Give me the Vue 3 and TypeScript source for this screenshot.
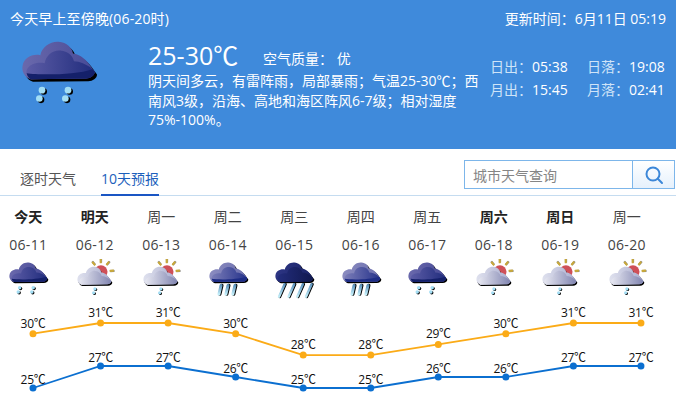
<script setup lang="ts">
type IconType = 'rain' | 'sunny' | 'shower' | 'storm'

interface Day {
  week: string
  date: string
  icon: IconType
  high: number
  low: number
  bold?: boolean
}

const days: Day[] = [
  { week: '今天', date: '06-11', icon: 'rain', high: 30, low: 25, bold: true },
  { week: '明天', date: '06-12', icon: 'sunny', high: 31, low: 27, bold: true },
  { week: '周一', date: '06-13', icon: 'sunny', high: 31, low: 27 },
  { week: '周二', date: '06-14', icon: 'shower', high: 30, low: 26 },
  { week: '周三', date: '06-15', icon: 'storm', high: 28, low: 25 },
  { week: '周四', date: '06-16', icon: 'shower', high: 28, low: 25 },
  { week: '周五', date: '06-17', icon: 'rain', high: 29, low: 26 },
  { week: '周六', date: '06-18', icon: 'sunny', high: 30, low: 26, bold: true },
  { week: '周日', date: '06-19', icon: 'sunny', high: 31, low: 27, bold: true },
  { week: '周一', date: '06-20', icon: 'sunny', high: 31, low: 27 },
]

// chart scale, taken from the two lines in the screenshot
const pointX = (i: number) => 33 + i * 67.55
const highY = (t: number) => 23 + (31 - t) * 10.7
const lowY = (t: number) => 66 + (27 - t) * 11

const highPoints = days.map((d, i) => ({ x: pointX(i), y: highY(d.high), t: d.high }))
const lowPoints = days.map((d, i) => ({ x: pointX(i), y: lowY(d.low), t: d.low }))
const toLine = (pts: { x: number; y: number }[]) => pts.map((p) => `${p.x},${p.y}`).join(' ')

const rays = [-130, -90, -50, -5]
</script>

<template>
  <div class="page">
    <svg class="defs" aria-hidden="true">
      <defs>
        <linearGradient id="rain-back" x1="0" x2="1" y1="0" y2="0">
          <stop offset="0" stop-color="#6a69ac" />
          <stop offset="1" stop-color="#474a96" />
        </linearGradient>
        <linearGradient id="rain-front" x1="0" x2="1" y1="0" y2="0">
          <stop offset="0" stop-color="#5c5ca6" />
          <stop offset="1" stop-color="#202c7c" />
        </linearGradient>
        <linearGradient id="shower-back" x1="0" x2="1" y1="0" y2="0">
          <stop offset="0" stop-color="#8b8cc0" />
          <stop offset="1" stop-color="#6d70ae" />
        </linearGradient>
        <linearGradient id="shower-front" x1="0" x2="1" y1="0" y2="0">
          <stop offset="0" stop-color="#7b7db8" />
          <stop offset="1" stop-color="#25328a" />
        </linearGradient>
        <linearGradient id="storm-back" x1="0" x2="1" y1="0" y2="0">
          <stop offset="0" stop-color="#2d3584" />
          <stop offset="1" stop-color="#1a2468" />
        </linearGradient>
        <linearGradient id="storm-front" x1="0" x2="1" y1="0" y2="0">
          <stop offset="0" stop-color="#232d7c" />
          <stop offset="1" stop-color="#10184e" />
        </linearGradient>
        <linearGradient id="pale-back" x1="0" x2="1" y1="0" y2="0">
          <stop offset="0" stop-color="#dfe1ee" />
          <stop offset="1" stop-color="#a9acce" />
        </linearGradient>
        <linearGradient id="pale-front" x1="0" x2="1" y1="0" y2="0">
          <stop offset="0" stop-color="#e6e7f1" />
          <stop offset="1" stop-color="#8084b0" />
        </linearGradient>
        <linearGradient id="bar" x1="0" x2="0" y1="0" y2="1">
          <stop offset="0" stop-color="#5d93bd" />
          <stop offset="1" stop-color="#c4effa" />
        </linearGradient>

        <path id="cloud-shape" d="M66 132C46 126 38 106 42 90C46 70 68 55 95 60C100 35 125 18 150 20C175 22 190 38 193 55C215 58 235 75 245 92L258 110C258 122 245 130 232 130Z" />
        <path id="cloud-front" d="M66 132C52 124 50 108 58 98C68 84 90 80 108 84C112 60 132 44 155 46C178 48 192 62 196 78C214 78 232 88 245 96L258 110C258 122 245 130 232 130Z" />
        <path id="cloud-band" d="M66 132C60 128 56 122 54 114C90 120 200 120 252 102L258 110C258 122 245 130 232 130Z" />

        <g id="drop-pair">
          <circle cx="13" cy="4" r="10" fill="#000" />
          <circle cx="8" cy="0" r="10" fill="#a3def5" />
          <circle cx="5" cy="29" r="10" fill="#000" />
          <circle cx="0" cy="25" r="10" fill="#a3def5" />
        </g>
        <g id="bar-one">
          <path d="M17 0L5 50" stroke="#000" stroke-width="19" stroke-linecap="round" />
          <path d="M12 0L0 50" stroke="url(#bar)" stroke-width="17" stroke-linecap="round" />
        </g>
        <g id="bar-long">
          <path d="M39 0L7 72" stroke="#000" stroke-width="16" stroke-linecap="round" />
          <path d="M34 0L2 72" stroke="url(#bar)" stroke-width="14" stroke-linecap="round" />
        </g>

        <symbol id="icon-rain" viewBox="28 0 240 230">
          <use href="#cloud-shape" fill="#000" transform="translate(7 8)" />
          <use href="#cloud-shape" fill="url(#rain-back)" />
          <use href="#cloud-front" fill="url(#rain-front)" />
          <use href="#cloud-band" fill="#14206a" />
          <use href="#drop-pair" x="92" y="165" />
          <use href="#drop-pair" x="170" y="165" />
        </symbol>

        <symbol id="icon-sunny" viewBox="28 0 240 230">
          <circle cx="182" cy="74" r="38" fill="#cf5058" />
          <g v-for="a in rays" :key="a" :transform="`translate(182 74) rotate(${a})`">
            <rect x="52" y="-6" width="27" height="13" rx="3" fill="#000" opacity=".45" />
            <rect x="50" y="-7" width="26" height="12" rx="3" fill="#c9a93a" />
          </g>
          <g transform="translate(10 26) scale(.9 .92)">
            <use href="#cloud-shape" fill="#000" transform="translate(6 9)" />
            <use href="#cloud-shape" fill="url(#pale-back)" />
            <use href="#cloud-front" fill="url(#pale-front)" />
          </g>
          <use href="#drop-pair" transform="translate(140 172) scale(.9)" />
        </symbol>

        <symbol id="icon-shower" viewBox="28 0 240 230">
          <use href="#cloud-shape" fill="#000" transform="translate(7 8)" />
          <use href="#cloud-shape" fill="url(#shower-back)" />
          <use href="#cloud-front" fill="url(#shower-front)" />
          <use href="#cloud-band" fill="#1d2c85" />
          <use href="#bar-one" x="96" y="152" />
          <use href="#bar-one" x="136" y="152" />
          <use href="#bar-one" x="176" y="152" />
        </symbol>

        <symbol id="icon-storm" viewBox="28 0 240 230">
          <use href="#cloud-shape" fill="#000" transform="translate(7 8)" />
          <use href="#cloud-shape" fill="url(#storm-back)" />
          <use href="#cloud-front" fill="url(#storm-front)" />
          <use href="#bar-long" x="60" y="145" />
          <use href="#bar-long" x="115" y="145" />
          <use href="#bar-long" x="165" y="145" />
          <use href="#bar-long" x="215" y="145" />
        </symbol>
      </defs>
    </svg>

    <header class="now">
      <div class="now-top">
        <span class="now-title">今天早上至傍晚(06-20时)</span>
        <span>更新时间：6月11日 05:19</span>
      </div>
      <div class="now-body">
        <svg class="now-icon" aria-hidden="true"><use href="#icon-rain" /></svg>
        <div class="summary">
          <div class="summary-head">
            <span class="temp">25-30℃</span>
            <span class="air">空气质量：&nbsp;优</span>
          </div>
          <p class="desc">阴天间多云，有雷阵雨，局部暴雨；气温25-30℃；西南风3级，沿海、高地和海区阵风6-7级；相对湿度75%-100%。</p>
        </div>
        <dl class="sun">
          <div><dt>日出：</dt><dd>05:38</dd></div>
          <div><dt>日落：</dt><dd>19:08</dd></div>
          <div><dt>月出：</dt><dd>15:45</dd></div>
          <div><dt>月落：</dt><dd>02:41</dd></div>
        </dl>
      </div>
    </header>

    <nav class="tabs">
      <a class="tab">逐时天气</a>
      <a class="tab active">10天预报</a>
      <form class="search" @submit.prevent>
        <input class="search-input" placeholder="城市天气查询" />
        <button class="search-btn" type="submit" aria-label="查询">
          <svg width="20" height="20" viewBox="0 0 20 20" fill="none" stroke="#3c87d8" stroke-width="2">
            <circle cx="9" cy="9" r="6.5" />
            <path d="M13.8 13.8L18 18" stroke-linecap="round" />
          </svg>
        </button>
      </form>
    </nav>

    <ul class="days">
      <li v-for="d in days" :key="d.date" class="day">
        <span class="week" :class="{ bold: d.bold }">{{ d.week }}</span>
        <span class="date">{{ d.date }}</span>
        <svg class="day-icon" aria-hidden="true"><use :href="`#icon-${d.icon}`" /></svg>
      </li>
    </ul>

    <svg class="chart" width="676" height="105" viewBox="0 0 676 105">
      <polyline :points="toLine(highPoints)" fill="none" stroke="#fbab17" stroke-width="1.8" />
      <polyline :points="toLine(lowPoints)" fill="none" stroke="#0b6fd0" stroke-width="1.8" />
      <g v-for="p in highPoints" :key="`h${p.x}`">
        <circle :cx="p.x" :cy="p.y" r="3.5" fill="#fbab17" />
        <text :x="p.x" :y="p.y - 6" text-anchor="middle">{{ p.t }}℃</text>
      </g>
      <g v-for="p in lowPoints" :key="`l${p.x}`">
        <circle :cx="p.x" :cy="p.y" r="3.5" fill="#0b6fd0" />
        <text :x="p.x" :y="p.y - 4" text-anchor="middle">{{ p.t }}℃</text>
      </g>
    </svg>
  </div>
</template>

<style>
body {
  background: #fff;
}
</style>

<style scoped>
.page {
  width: 676px;
  height: 405px;
  overflow: hidden;
  background: #fff;
  font-family: "Open Sans", "Noto Sans CJK SC", sans-serif;
  font-size: 14px;
}
.defs {
  display: block;
  width: 0;
  height: 0;
}
.now {
  height: 149px;
  box-sizing: border-box;
  padding: 9px 10px 0;
  background: #3f8adb;
  color: #fff;
}
.now-top {
  display: flex;
  justify-content: space-between;
  line-height: 20px;
}
.now-title {
  letter-spacing: 0.15px;
}
.now-body {
  display: flex;
  margin-top: 9px;
}
.now-icon {
  width: 80px;
  height: 77px;
  margin: -3px 0 0 8px;
  flex: none;
}
.summary {
  width: 335px;
  margin-left: 50px;
  padding-top: 2px;
  flex: none;
}
.summary-head {
  display: flex;
  align-items: center;
  height: 31px;
}
.temp {
  font-size: 25px;
  line-height: 31px;
  width: 115px;
}
.air {
  margin-top: 4px;
}
.desc {
  margin: 0;
  line-height: 19.5px;
}
.sun {
  display: grid;
  grid-template-columns: 97px auto;
  row-gap: 3px;
  align-self: flex-start;
  margin: 19px 0 0 7px;
  white-space: nowrap;
}
.sun div {
  display: flex;
  line-height: 20px;
}
.sun dt {
  color: #cfe4f8;
}
.sun dd {
  margin: 0;
}
.tabs {
  display: flex;
  height: 47px;
  box-sizing: border-box;
  padding-left: 20px;
  gap: 25px;
  border-bottom: 1px solid #c5dcf0;
}
.tab {
  height: 47px;
  box-sizing: border-box;
  padding-top: 20px;
  line-height: 20px;
  color: #555;
}
.tab.active {
  color: #1c5fbc;
  border-bottom: 2px solid #1a56c4;
}
.search {
  display: flex;
  margin: 11px 1px 0 auto;
  width: 211px;
  height: 29px;
  box-sizing: border-box;
  border: 1px solid #7db6ea;
}
.search-input {
  width: 167px;
  box-sizing: border-box;
  border: 0;
  padding: 1px 8px 0;
  outline: 0;
  font: inherit;
  color: #555;
}
.search-input::placeholder {
  color: #858585;
  opacity: 1;
}
.search-btn {
  flex: 1;
  display: flex;
  align-items: center;
  justify-content: center;
  padding: 0;
  border: 0;
  border-left: 1px solid #7db6ea;
  background: linear-gradient(#fff, #e6f1fc);
}
.days {
  display: flex;
  gap: 10px;
  margin: 0;
  padding: 7px 0 0;
  list-style: none;
}
.day {
  width: 56.5px;
  flex: none;
  display: flex;
  flex-direction: column;
  align-items: center;
}
.week {
  line-height: 28px;
  color: #444;
}
.week.bold {
  font-weight: 700;
  color: #222;
}
.date {
  line-height: 28px;
  letter-spacing: 0.3px;
  white-space: nowrap;
  color: #444;
}
.day-icon {
  width: 42px;
  height: 40px;
}
.chart {
  display: block;
  margin-top: 1px;
}
.chart text {
  font-size: 12px;
  fill: #111;
  letter-spacing: -0.3px;
}
</style>
